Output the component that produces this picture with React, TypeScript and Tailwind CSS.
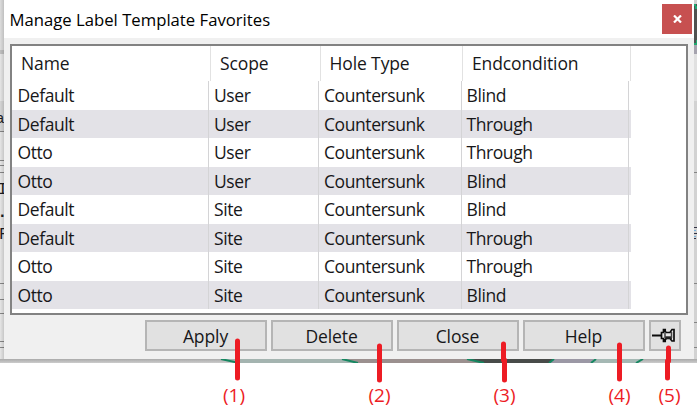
import React from "react";

const rows = [
  ["Default", "User", "Countersunk", "Blind"],
  ["Default", "User", "Countersunk", "Through"],
  ["Otto", "User", "Countersunk", "Through"],
  ["Otto", "User", "Countersunk", "Blind"],
  ["Default", "Site", "Countersunk", "Blind"],
  ["Default", "Site", "Countersunk", "Through"],
  ["Otto", "Site", "Countersunk", "Through"],
  ["Otto", "Site", "Countersunk", "Blind"],
];

// Slivers of the application window that show around the dialog.
function LeftBackdrop() {
  return (
    <svg width="4" height="359" viewBox="0 0 4 359" shapeRendering="crispEdges">
      <defs>
        <linearGradient id="left-shadow" x1="0" y1="0" x2="1" y2="0">
          <stop offset="0" stopColor="#000" stopOpacity="0.03" />
          <stop offset="1" stopColor="#000" stopOpacity="0.16" />
        </linearGradient>
      </defs>
      <rect width="4" height="359" fill="#ededed" />
      <rect width="4" height="50" fill="#e4e4e4" />
      <rect y="50" width="4" height="4" fill="#c6c6c6" />
      <rect y="101" width="4" height="30" fill="#dcdcdc" />
      {[131, 160, 165, 172, 283, 299, 313, 341, 347].map((y) => (
        <rect key={y} y={y} width="4" height="1" fill="#8a8a8a" />
      ))}
      <g fill="#1c1c24" fontFamily="Liberation Mono, monospace">
        <text x="-4" y="123" fontSize="14">a</text>
        <text x="-2" y="194" fontSize="16">I</text>
        <text x="-2.5" y="217" fontSize="16" fontWeight="bold">.</text>
        <text x="-1" y="239" fontSize="16">F</text>
      </g>
      <rect width="4" height="359" fill="url(#left-shadow)" />
    </svg>
  );
}

function RightBackdrop() {
  return (
    <svg width="3" height="359" viewBox="0 0 3 359" shapeRendering="crispEdges">
      <rect width="3" height="359" fill="#d2d2d2" />
      <rect y="4" width="3" height="41" fill="#505251" />
      <path d="M0 4H2V6H3V9H1V6H0ZM0 45V43H2V40H3V45Z" fill="#20a870" />
      <rect y="45" width="3" height="9" fill="#a5a3ae" />
      <rect y="54" width="3" height="47" fill="#e0e0e0" />
      {[172, 283, 322, 347].map((y) => (
        <rect key={y} y={y} width="3" height="1" fill="#858585" />
      ))}
      <path d="M0 227.5H3M0 233.5H3M0 238.5H2" stroke="#334" />
      <path d="M0 230.5H2M0 236.5H2" stroke="#79b4de" />
    </svg>
  );
}

function BottomBackdrop() {
  return (
    <svg width="697" height="4" viewBox="0 0 697 4" preserveAspectRatio="none">
      <defs>
        <linearGradient id="shade" x1="0" y1="0" x2="0" y2="1">
          <stop offset="0" stopColor="#aaaaaa" />
          <stop offset="1" stopColor="#cccccc" />
        </linearGradient>
      </defs>
      <rect width="697" height="4" fill="url(#shade)" />
      <path d="M222 0H343L357 4H237Z" fill="#a4b4b0" />
      <path d="M343 0H467L482 4H357Z" fill="#9b908f" />
      <path d="M467 0H554L549 4H482Z" fill="#484b49" />
      <path d="M554 0H594L591 4H549Z" fill="#9b98a5" />
      <path d="M594 0H642L636 4H591Z" fill="#a5b8b4" />
      <path d="M221 0L239 4M342 0L358 4M467 0L484 4M554 0L549 4M596 0L591 4M643 0L636 4" stroke="#168761" strokeWidth="2" fill="none" />
    </svg>
  );
}

function PushPin() {
  return (
    <svg width="23" height="15" viewBox="0 0 23 15" fill="none" stroke="#0c0c0c" className="-ml-[3px]">
      <path d="M0 7.5H9" strokeWidth="2" />
      <path d="M9.5 4.5H11.5V1.5H13.2V3.5L14.5 4.5H18L20 1.5H22V13H20L18 10.5H14.5L13.2 11.5V13.5H11.5V10.5H9.5Z" fill="#e8e8e8" strokeWidth="1.7" />
      <path d="M13 9.6H20" stroke="#222" strokeWidth="2.6" />
      <path d="M13 4.5V10M19.5 4V10" stroke="#444" strokeWidth="1.5" />
    </svg>
  );
}

function Button({ children }: { children: React.ReactNode }) {
  return (
    <button className="flex h-[31px] w-[122px] items-center justify-center border-2 border-[#b5b5b5] bg-[#e1e1e1] pt-px pr-px text-[17.5px] tracking-[-0.1px] text-[#171719]">
      {children}
    </button>
  );
}

export default function App() {
  return (
    <div className="relative h-[413px] w-[697px] overflow-hidden bg-white font-['Open_Sans','Noto_Sans',sans-serif]">
      <div className="flex h-[359px]">
        <LeftBackdrop />
        <section className="flex w-[690px] flex-col bg-[#f0f0f0] text-[#171719]">
          <header className="flex h-[38px] items-start justify-between bg-white pr-[2px] pl-[5.5px] pt-1">
            <h1 className="whitespace-nowrap text-[16.7px] leading-[31px] text-black">Manage Label Template Favorites</h1>
            <button aria-label="Close" className="flex size-[30px] items-center justify-center bg-[#c75050]">
              <svg width="9" height="8" viewBox="0 0 9 8" stroke="white" strokeWidth="2.2" className="block">
                <path d="M1 .5L8 7.5M8 .5L1 7.5" />
              </svg>
            </button>
          </header>
          <main className="ml-[6px] mt-[6px] h-[271px] w-[678px] border-2 border-[#828282] bg-white text-[17.5px]">
            <div className="grid h-[35px] grid-cols-[199px_109.5px_142.5px_168px] leading-[35px] tracking-[-0.12px]">
              {["Name", "Scope", "Hole Type", "Endcondition"].map((name) => (
                <div key={name} className="whitespace-nowrap border-r border-[#e2e2e2] pl-[9px]">{name}</div>
              ))}
            </div>
            {rows.map((row, i) => (
              <div key={i} className={`grid h-[28.5px] w-[618.5px] grid-cols-[197px_110px_142.5px_167.5px] leading-[29px] tracking-[-0.42px] ${i % 2 ? "bg-[#e3e2e7]" : ""}`}>
                {row.map((cell, j) => (
                  <div key={j} className="h-[28.5px] whitespace-nowrap border-r border-[#d4d4d6] pl-[5px] first:pl-[5.5px]">{cell}</div>
                ))}
              </div>
            ))}
          </main>
          <footer className="mt-[5px] flex gap-1 pl-[141px]">
            <Button>Apply</Button><Button>Delete</Button><Button>Close</Button><Button>Help</Button>
            <button aria-label="Pin" className="flex h-[31px] w-[32px] items-center justify-center border-2 border-[#b5b5b5] bg-[#e1e1e1]"><PushPin /></button>
          </footer>
        </section>
        <RightBackdrop />
      </div>
      <BottomBackdrop />
      <svg className="pointer-events-none absolute inset-0" width="697" height="413" viewBox="0 0 697 413" fill="none" stroke="#ed1c24" strokeWidth="5" strokeLinecap="round">
        <path d="M237.5 341V378M379.5 346V380M503.5 344V360M504.5 360V380M619.5 345V379M668.5 348V361M667.5 361V378" />
        <g fill="#ed1c24" stroke="none" fontFamily="Open Sans" fontSize="19" textAnchor="middle">
          <text x="234" y="402">(1)</text><text x="379.5" y="402">(2)</text><text x="504.5" y="402">(3)</text><text x="619.5" y="402">(4)</text><text x="669.5" y="402">(5)</text>
        </g>
      </svg>
    </div>
  );
}
